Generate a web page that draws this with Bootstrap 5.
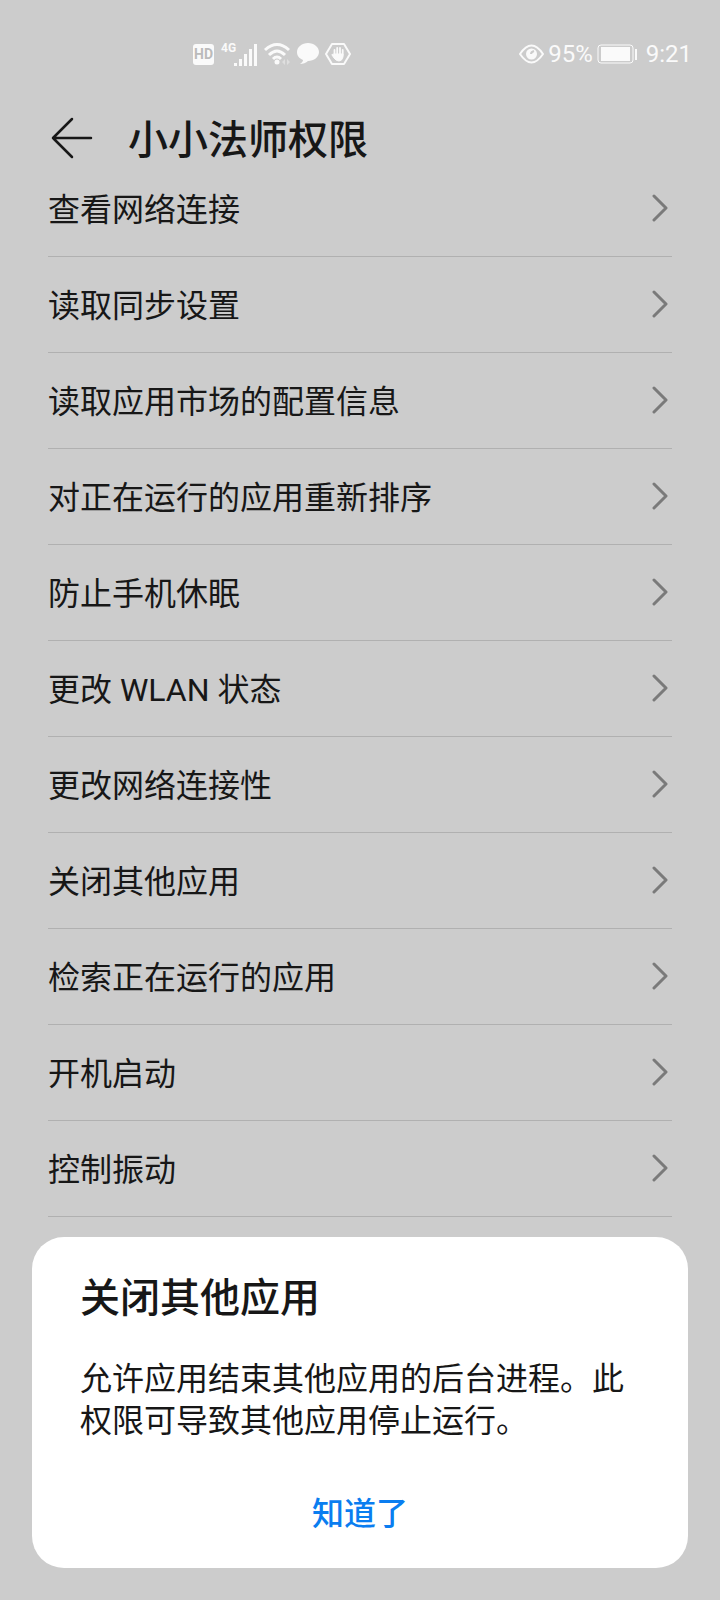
<!DOCTYPE html>
<html lang="zh-CN">
<head>
<meta charset="utf-8">
<meta name="viewport" content="width=device-width, initial-scale=1">
<title>小小法师权限</title>
<link href="https://cdn.jsdelivr.net/npm/bootstrap@5.3.0/dist/css/bootstrap.min.css" rel="stylesheet">
<style>
  body { background: #ccc; color: #171717; font-family: Roboto, "Noto Sans CJK SC", sans-serif; font-size: 32px; line-height: 42px; }
  svg { display: block; flex: none; }
  .status { height: 104px; padding: 4px 28px 0 192px; color: #fafafa; font-size: 24px; line-height: 32px; }
  .page-head { height: 57px; padding: 12px 48px 0; }
  .page-head h1, .sheet h2 { font-size: 40px; line-height: 60px; font-weight: 500; margin: 0; }
  .page-head h1 { padding-top: 4px; }
  .back { width: 48px; height: 48px; margin-right: 32px; }
  .perms { padding: 0 48px; }
  .perms a { height: 96px; padding-top: 2px; border-bottom: 1px solid #b0b0b0; color: inherit; }
  .chev { color: #7a7a7a; }
  .sheet { margin: 32px; padding: 32px 48px 30px; background: #fff; border-radius: 32px; }
  .sheet p { margin: 29px 0 48px; }
  .sheet button { font-size: 32px; line-height: 48px; font-weight: 500; color: #0a7df0; }
</style>
</head>
<body>
<header>
  <div class="status d-flex align-items-center justify-content-between">
    <div class="d-flex align-items-center gap-1">
      <svg width="23" height="23" viewBox="0 0 23 23"><rect x="1" y="1" width="21" height="21" rx="3" fill="currentColor"/><text x="11.500" y="16" text-anchor="middle" font-family="Roboto" font-size="14" font-weight="700" fill="#bbb">HD</text></svg>
      <svg width="40" height="26" viewBox="0 0 40 26" fill="currentColor"><text x="2" y="11" font-family="Roboto" font-size="12" font-weight="700">4G</text><path d="M15 22h3v3h-3zM20 18h3v7h-3zM25 13h3v12h-3zM30 8h3v17h-3zM35 3h3v22h-3z"/></svg>
      <svg width="29" height="24" viewBox="0 0 29 24" fill="none" stroke="currentColor" stroke-width="3"><path d="M2 8Q14-3 26 8M6 13q8-8 16 0M10 17q4-4 8 0"/><circle cx="14" cy="20" r="2.500" fill="currentColor" stroke="none"/><path d="m22 17-3 3 3 3zM24 17l3 3-3 3z" fill="#dedede" stroke="none"/></svg>
      <svg width="25" height="24" viewBox="0 0 25 24" fill="currentColor"><path d="M12 1c6 0 11 4 11 9s-5 9-11 9c-2 2-5 3-8 3 2-1 3-3 3-4-4-2-6-4-6-8 0-5 5-9 11-9z"/></svg>
      <svg width="26" height="24" viewBox="0 0 26 24" fill="none" stroke="currentColor" stroke-width="2" stroke-linecap="round" stroke-linejoin="round"><path d="M7 2h12l6 10-6 10H7L1 12z"/><path d="M9.500 12V8M12.200 12V6M15 12V6M17.700 13V8" stroke-width="1.800"/><path d="M9 12h9v3q-1 4-4 4t-5-3l-2-3z" fill="currentColor" stroke-width="1"/></svg>
    </div>
    <div class="d-flex align-items-center gap-1">
      <svg width="25" height="20" viewBox="0 0 25 20" fill="none" stroke="currentColor" stroke-width="2"><path d="M1 10Q12.500-7 24 10 12.500 27 1 10z"/><circle cx="12.500" cy="10" r="5.500" fill="currentColor" stroke="none"/><path d="M12 10q0-2 3-3" stroke="#ccc"/></svg>
      <span>95%</span>
      <svg width="41" height="20" viewBox="0 0 41 20"><rect x="1" y="1" width="35" height="18" rx="3" fill="none" stroke="currentColor" stroke-width="1"/><path d="M4 3h29v14H4zM38 5h2v11h-2z" fill="currentColor"/></svg>
      <span class="ms-1">9:21</span>
    </div>
  </div>
  <div class="page-head d-flex align-items-center">
    <button type="button" class="back btn p-0 border-0" aria-label="返回"><svg width="48" height="48" viewBox="0 0 48 48" fill="none" stroke="#171717" stroke-width="2.500" stroke-linecap="round" stroke-linejoin="round"><path d="M24 4 5 23l19 19M5 23h38"/></svg></button>
    <h1>小小法师权限</h1>
  </div>
</header>
<main class="perms">
  <a href="#" class="d-flex align-items-center justify-content-between text-decoration-none">查看网络连接<svg class="chev" width="24" height="32" viewBox="0 0 24 32" fill="none" stroke="currentColor" stroke-width="3" stroke-linecap="round" stroke-linejoin="round"><path id="chev" d="m6 2 12 12L6 26"/></svg></a>
  <a href="#" class="d-flex align-items-center justify-content-between text-decoration-none">读取同步设置<svg class="chev" width="24" height="32" viewBox="0 0 24 32" fill="none" stroke="currentColor" stroke-width="3" stroke-linecap="round" stroke-linejoin="round"><use href="#chev"/></svg></a>
  <a href="#" class="d-flex align-items-center justify-content-between text-decoration-none">读取应用市场的配置信息<svg class="chev" width="24" height="32" viewBox="0 0 24 32" fill="none" stroke="currentColor" stroke-width="3" stroke-linecap="round" stroke-linejoin="round"><use href="#chev"/></svg></a>
  <a href="#" class="d-flex align-items-center justify-content-between text-decoration-none">对正在运行的应用重新排序<svg class="chev" width="24" height="32" viewBox="0 0 24 32" fill="none" stroke="currentColor" stroke-width="3" stroke-linecap="round" stroke-linejoin="round"><use href="#chev"/></svg></a>
  <a href="#" class="d-flex align-items-center justify-content-between text-decoration-none">防止手机休眠<svg class="chev" width="24" height="32" viewBox="0 0 24 32" fill="none" stroke="currentColor" stroke-width="3" stroke-linecap="round" stroke-linejoin="round"><use href="#chev"/></svg></a>
  <a href="#" class="d-flex align-items-center justify-content-between text-decoration-none">更改 WLAN 状态<svg class="chev" width="24" height="32" viewBox="0 0 24 32" fill="none" stroke="currentColor" stroke-width="3" stroke-linecap="round" stroke-linejoin="round"><use href="#chev"/></svg></a>
  <a href="#" class="d-flex align-items-center justify-content-between text-decoration-none">更改网络连接性<svg class="chev" width="24" height="32" viewBox="0 0 24 32" fill="none" stroke="currentColor" stroke-width="3" stroke-linecap="round" stroke-linejoin="round"><use href="#chev"/></svg></a>
  <a href="#" class="d-flex align-items-center justify-content-between text-decoration-none">关闭其他应用<svg class="chev" width="24" height="32" viewBox="0 0 24 32" fill="none" stroke="currentColor" stroke-width="3" stroke-linecap="round" stroke-linejoin="round"><use href="#chev"/></svg></a>
  <a href="#" class="d-flex align-items-center justify-content-between text-decoration-none">检索正在运行的应用<svg class="chev" width="24" height="32" viewBox="0 0 24 32" fill="none" stroke="currentColor" stroke-width="3" stroke-linecap="round" stroke-linejoin="round"><use href="#chev"/></svg></a>
  <a href="#" class="d-flex align-items-center justify-content-between text-decoration-none">开机启动<svg class="chev" width="24" height="32" viewBox="0 0 24 32" fill="none" stroke="currentColor" stroke-width="3" stroke-linecap="round" stroke-linejoin="round"><use href="#chev"/></svg></a>
  <a href="#" class="d-flex align-items-center justify-content-between text-decoration-none">控制振动<svg class="chev" width="24" height="32" viewBox="0 0 24 32" fill="none" stroke="currentColor" stroke-width="3" stroke-linecap="round" stroke-linejoin="round"><use href="#chev"/></svg></a>
</main>
<section class="sheet fixed-bottom" role="dialog" aria-labelledby="sheet-title">
  <h2 id="sheet-title">关闭其他应用</h2>
  <p>允许应用结束其他应用的后台进程。此权限可导致其他应用停止运行。</p>
  <button type="button" class="btn w-100 p-0 border-0">知道了</button>
</section>
<script src="https://cdn.jsdelivr.net/npm/bootstrap@5.3.0/dist/js/bootstrap.bundle.min.js"></script>
</body>
</html>
